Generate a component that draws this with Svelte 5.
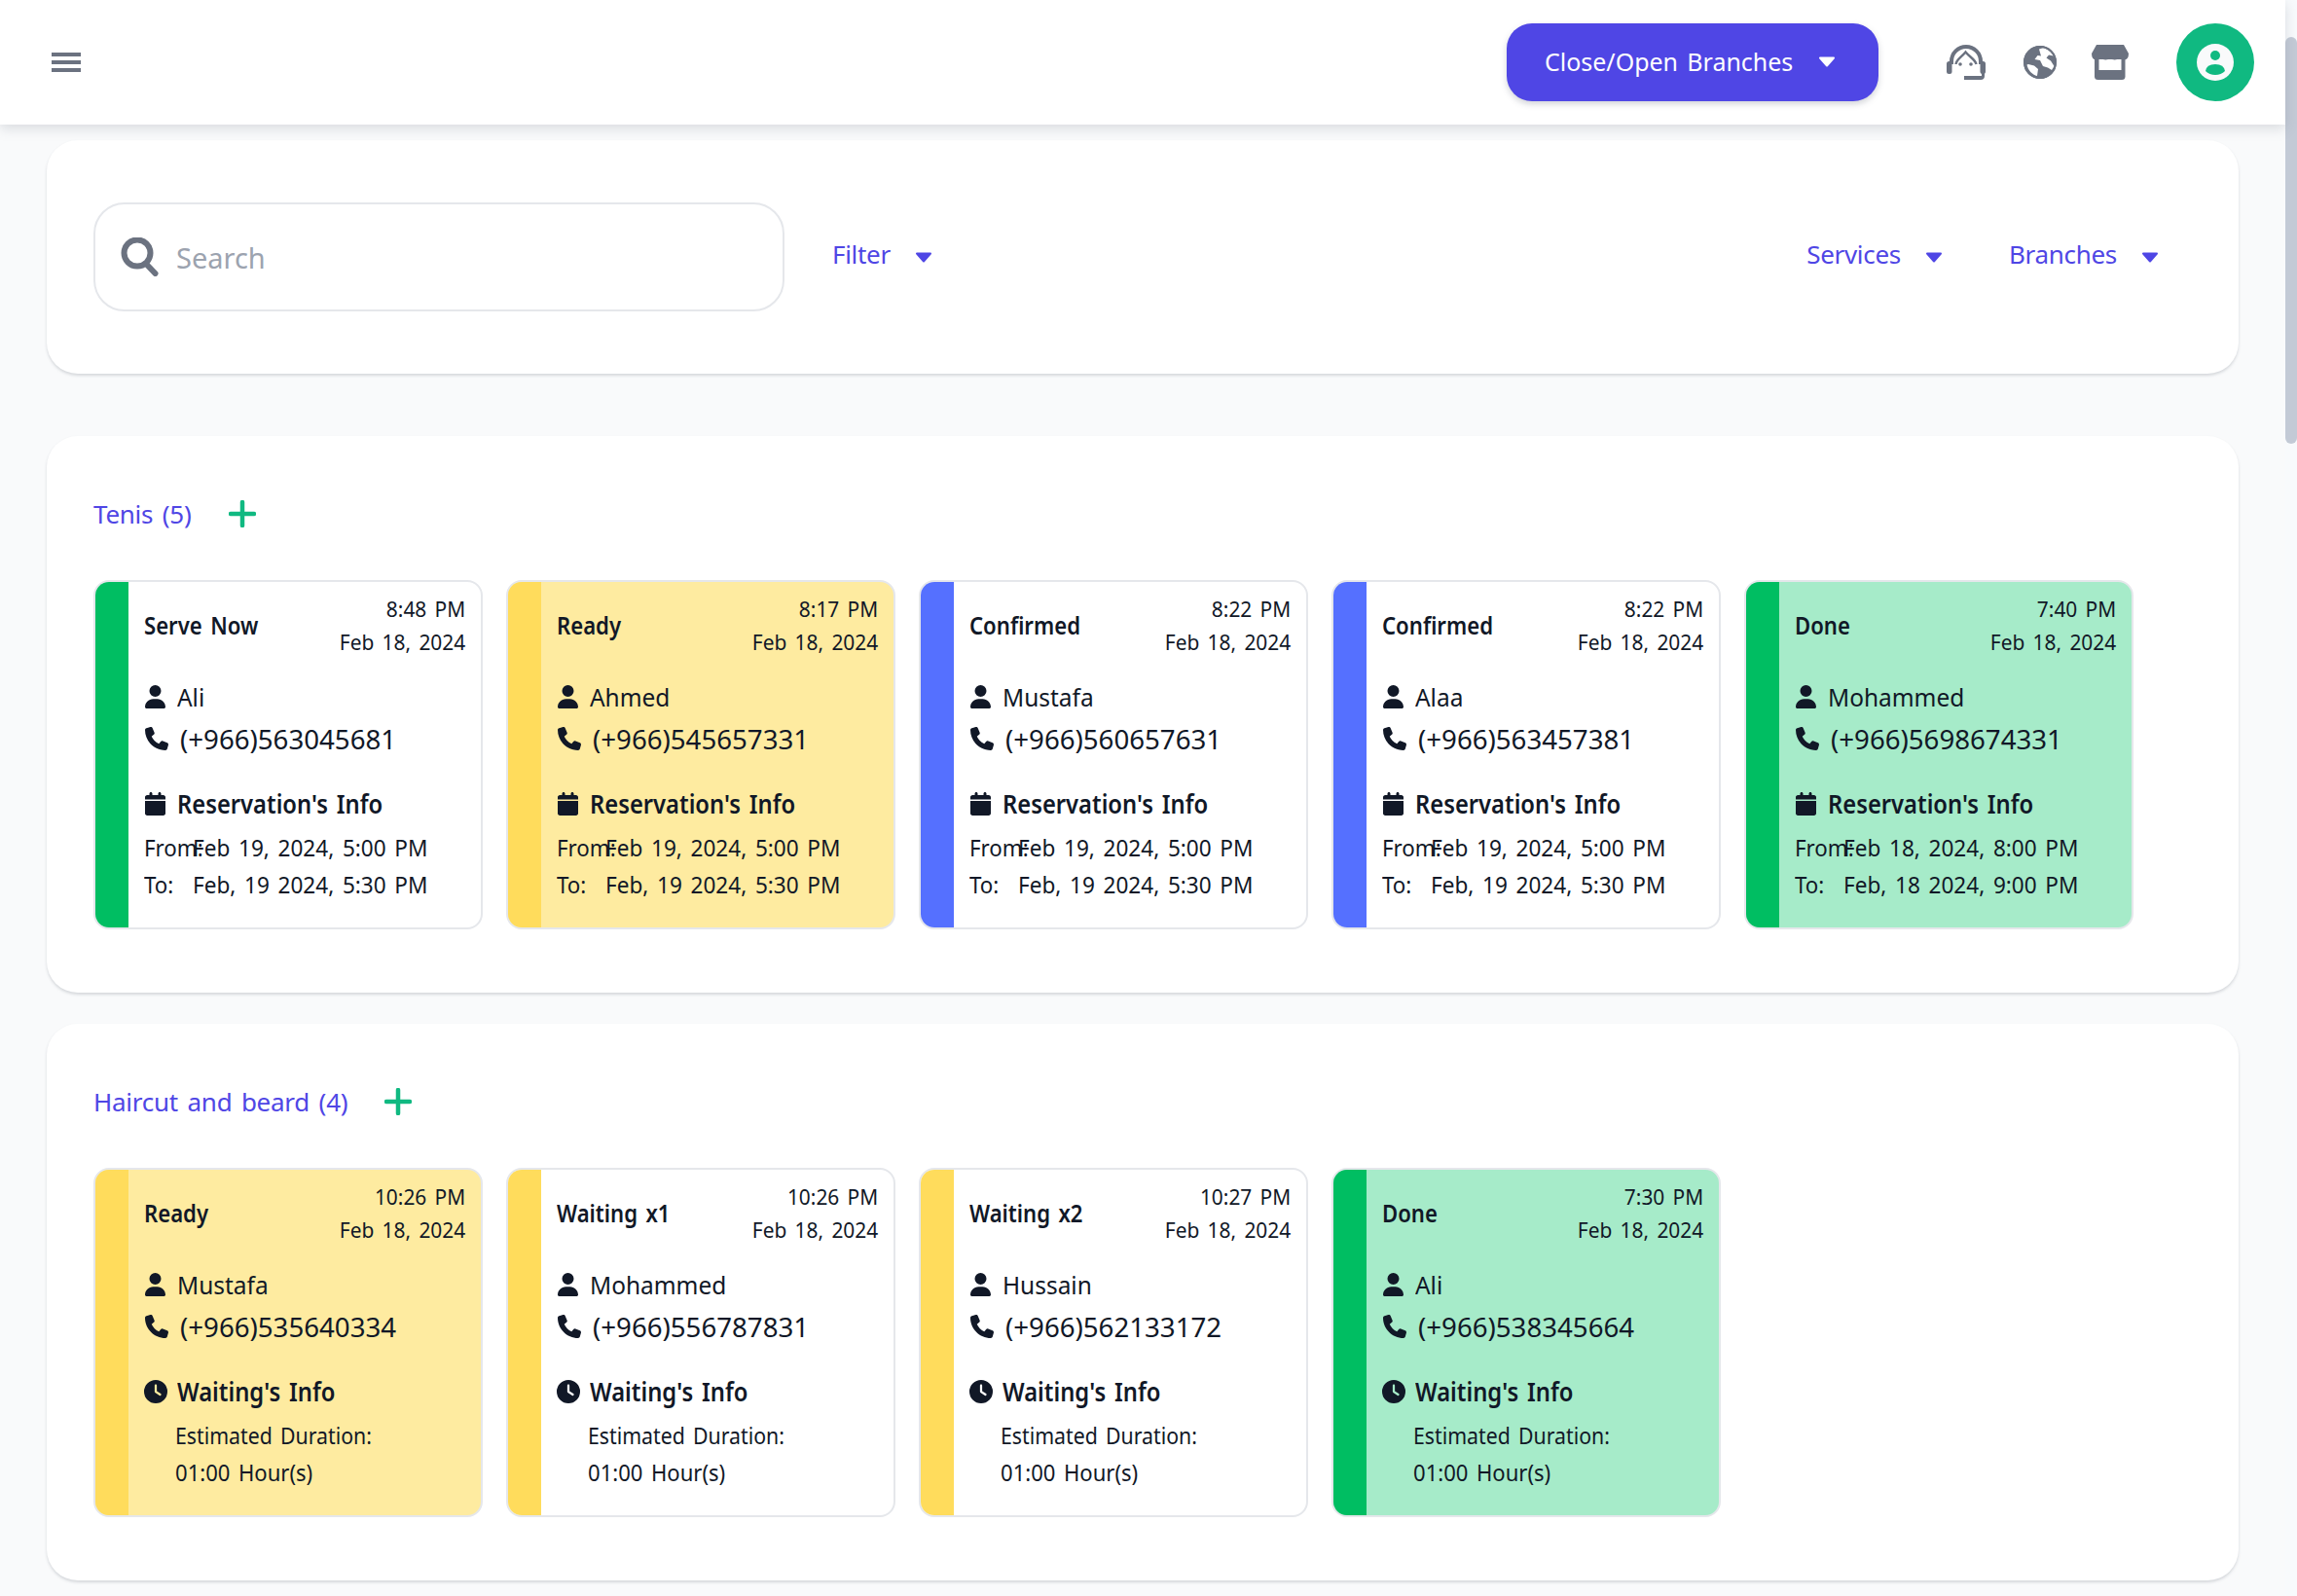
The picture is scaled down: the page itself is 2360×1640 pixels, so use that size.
<script>
  const P = {
    user: ['0 0 448 512','M224 256A128 128 0 1 0 224 0a128 128 0 1 0 0 256zm-45.7 48C79.8 304 0 383.8 0 482.3C0 498.7 13.3 512 29.7 512H418.3c16.4 0 29.7-13.3 29.7-29.7C448 383.8 368.2 304 269.7 304H178.3z'],
    phone: ['0 0 512 512','M164.9 24.6c-7.7-18.6-28-28.5-47.4-23.2l-88 24C12.1 30.2 0 46 0 64C0 311.4 200.6 512 448 512c18 0 33.8-12.1 38.6-29.5l24-88c5.3-19.4-4.6-39.7-23.2-47.4l-96-40c-16.3-6.8-35.2-2.1-46.3 11.6L304.7 368C234.3 334.7 177.3 277.7 144 207.3L193.3 167c13.7-11.2 18.4-30 11.6-46.3l-40-96z'],
    cal: ['0 0 448 512','M96 32V64H48C21.5 64 0 85.5 0 112v48H448V112c0-26.5-21.5-48-48-48H352V32c0-17.7-14.3-32-32-32s-32 14.3-32 32V64H160V32c0-17.7-14.3-32-32-32S96 14.3 96 32zM448 192H0V464c0 26.5 21.5 48 48 48H400c26.5 0 48-21.5 48-48V192z'],
    clock: ['0 0 512 512','M256 0a256 256 0 1 1 0 512A256 256 0 1 1 256 0zM232 120V256c0 8 4 15.5 10.7 20l96 64c11 7.4 25.9 4.4 33.3-6.7s4.4-25.9-6.7-33.3L280 243.2V120c0-13.3-10.7-24-24-24s-24 10.7-24 24z']
  };

  const res = (status, color, time, date, name, phone, from, to) => ({ kind: 'res', status, color, time, date, name, phone, from, to });
  const wait = (status, color, time, date, name, phone) => ({ kind: 'wait', status, color, time, date, name, phone });

  const sections = [
    { title: 'Tenis', count: 5, cards: [
      res('Serve Now', 'green', '8:48 PM', 'Feb 18, 2024', 'Ali', '(+966)563045681', 'Feb 19, 2024, 5:00 PM', 'Feb, 19 2024, 5:30 PM'),
      res('Ready', 'ready', '8:17 PM', 'Feb 18, 2024', 'Ahmed', '(+966)545657331', 'Feb 19, 2024, 5:00 PM', 'Feb, 19 2024, 5:30 PM'),
      res('Confirmed', 'blue', '8:22 PM', 'Feb 18, 2024', 'Mustafa', '(+966)560657631', 'Feb 19, 2024, 5:00 PM', 'Feb, 19 2024, 5:30 PM'),
      res('Confirmed', 'blue', '8:22 PM', 'Feb 18, 2024', 'Alaa', '(+966)563457381', 'Feb 19, 2024, 5:00 PM', 'Feb, 19 2024, 5:30 PM'),
      res('Done', 'done', '7:40 PM', 'Feb 18, 2024', 'Mohammed', '(+966)5698674331', 'Feb 18, 2024, 8:00 PM', 'Feb, 18 2024, 9:00 PM')
    ]},
    { title: 'Haircut and beard', count: 4, cards: [
      wait('Ready', 'ready', '10:26 PM', 'Feb 18, 2024', 'Mustafa', '(+966)535640334'),
      wait('Waiting x1', 'yellow', '10:26 PM', 'Feb 18, 2024', 'Mohammed', '(+966)556787831'),
      wait('Waiting x2', 'yellow', '10:27 PM', 'Feb 18, 2024', 'Hussain', '(+966)562133172'),
      wait('Done', 'done', '7:30 PM', 'Feb 18, 2024', 'Ali', '(+966)538345664')
    ]}
  ];
</script>

{#snippet icon(name, cls)}
  <svg class={cls} viewBox={P[name][0]} aria-hidden="true"><path d={P[name][1]} fill="currentColor" /></svg>
{/snippet}

{#snippet caret()}
  <svg class="caret" viewBox="0 0 18 11" aria-hidden="true"><path d="M2 1.500H16L9 9.500Z" fill="currentColor" stroke="currentColor" stroke-width="2" stroke-linejoin="round" /></svg>
{/snippet}

{#snippet dropdown(label)}
  <button class="drop"><span>{label}</span>{@render caret()}</button>
{/snippet}

<div class="page">
  <div class="main">
    <header class="topbar">
      <svg class="menu" viewBox="0 0 30 20" aria-hidden="true">
        <rect y="0" width="30" height="4" /><rect y="8" width="30" height="4" /><rect y="16" width="30" height="4" />
      </svg>
      <div class="top-right">
        <button class="branch-btn"><span>Close/Open Branches</span>{@render caret()}</button>
        <svg class="i-agent" viewBox="0 0 40 36" aria-hidden="true">
          <path d="M5 20V17A15 15 0 0 1 35 17V20" fill="none" stroke="#6b7280" stroke-width="4" />
          <path d="M9.500 20C10 15 15 13 19.500 7.500C24 13 29.500 15 30.500 20" fill="none" stroke="#6b7280" stroke-width="2.400" />
          <rect x="0" y="17" width="5.500" height="13" rx="2.500" fill="#6b7280" />
          <rect x="34.500" y="17" width="5.500" height="13" rx="2.500" fill="#6b7280" />
          <circle cx="14" cy="20" r="1.800" fill="#6b7280" /><circle cx="25" cy="20" r="1.800" fill="#6b7280" />
          <path d="M36 28V32H18V36H35Q39 36 39 32V28Z" fill="#6b7280" />
        </svg>
        <svg class="i-globe" viewBox="0 0 34 34" aria-hidden="true">
          <circle cx="17" cy="17" r="17" fill="#6b7280" />
          <path d="M16 3.500L20 2.200C24 2.800 29 6 31 10.500L26 9.500L23.500 12.500L28 15.500L31.500 21L29 25L25 22.500L20 21L17 15L11.500 14L14.500 10L18 10.500ZM5 19L11 20.500L15 24L14 31C9 30 4.500 25 3.500 19.500Z" fill="#fff" />
          <circle cx="17" cy="17" r="16" fill="none" stroke="#6b7280" stroke-width="2" />
        </svg>
        <svg class="i-store" viewBox="0 0 38 36" aria-hidden="true">
          <rect x="3" y="12" width="31.500" height="24" rx="3.500" fill="#6b7280" />
          <rect x="7.500" y="15" width="23" height="11" fill="#fff" />
          <path d="M5 0H33L38 9Q38 15 33.500 15.500Q30 15.500 28.500 13Q26.500 15.500 23.700 15.500Q20.500 15.500 19 13Q17.500 15.500 14.300 15.500Q11.500 15.500 9.500 13Q8 15.500 4.500 15.500Q0 15 0 9Z" fill="#6b7280" />
        </svg>
        <div class="avatar">
          <svg viewBox="0 0 38 38" aria-hidden="true">
            <circle cx="19" cy="19" r="19" fill="#f9fafb" />
            <circle cx="19" cy="12" r="5" fill="#10b981" />
            <path d="M9 28Q10 21 19 21Q28 21 29 28Q25 32 19 32Q13 32 9 28Z" fill="#10b981" />
          </svg>
        </div>
      </div>
    </header>

    <main class="content">
      <section class="panel toolbar">
        <div class="search">
          <svg class="i-search" viewBox="0 0 40 40" aria-hidden="true">
            <circle cx="17" cy="16" r="13.500" fill="none" stroke="#6b7280" stroke-width="6" />
            <path d="M26 27L35.500 37" fill="none" stroke="#6b7280" stroke-width="6" stroke-linecap="round" />
          </svg>
          <span class="placeholder">Search</span>
        </div>
        {@render dropdown('Filter')}
        <div class="spacer"></div>
        {@render dropdown('Services')}
        {@render dropdown('Branches')}
      </section>

      {#each sections as s}
        <section class="panel group">
          <div class="group-head">
            <span>{s.title} ({s.count})</span>
            <svg class="plus" viewBox="0 0 28 28" aria-hidden="true"><path d="M14 2V26M2 14H26" /></svg>
          </div>
          <div class="cards">
            {#each s.cards as c}
              <article class="card {c.color}">
                <div class="bar"></div>
                <div class="body">
                  <div class="head">
                    <strong>{c.status}</strong>
                    <div class="stamp"><div>{c.time}</div><div>{c.date}</div></div>
                  </div>
                  <div class="row name">{@render icon('user', 'ic-user')}<span>{c.name}</span></div>
                  <div class="row phone">{@render icon('phone', 'ic-phone')}<span>{c.phone}</span></div>
                  {#if c.kind === 'res'}
                    <div class="row info">{@render icon('cal', 'ic-user')}<b>Reservation's Info</b></div>
                    <div class="when first"><span class="lbl">From:</span><span class="val">{c.from}</span></div>
                    <div class="when"><span class="lbl">To:</span><span class="val">{c.to}</span></div>
                  {:else}
                    <div class="row info">{@render icon('clock', 'ic-clock')}<b>Waiting's Info</b></div>
                    <div class="est first">Estimated Duration:</div>
                    <div class="est">01:00 Hour(s)</div>
                  {/if}
                </div>
              </article>
            {/each}
          </div>
        </section>
      {/each}
    </main>
  </div>
  <div class="scrollbar"><div class="thumb"></div></div>
</div>

<style>
  :global(body) { margin: 0; background: #f9fafb; }
  .page {
    display: flex; height: 1640px; overflow: hidden; background: #f9fafb;
    font-family: "Noto Sans", sans-serif; color: #111827; word-spacing: 3px;
  }
  .main { flex: 1; min-width: 0; }
  .scrollbar { width: 12px; background: #f8fafc; padding-top: 38px; box-sizing: border-box; }
  .thumb { height: 418px; background: #c3cad6; border-radius: 6px; }

  .topbar {
    height: 128px; background: #fff; display: flex; align-items: center; justify-content: space-between;
    padding: 0 32px 0 53px; box-shadow: 0 4px 12px rgba(107, 114, 128, .22); position: relative;
  }
  .menu { width: 30px; height: 20px; fill: #6b7280; }
  .top-right { display: flex; align-items: center; }
  .branch-btn {
    width: 382px; height: 80px; border: 0; border-radius: 26px; background: #4f46e5; color: #fff;
    font: inherit; font-size: 26px; word-spacing: 3px; display: flex; align-items: center; padding: 0 44px 2px 39px;
    justify-content: space-between; box-shadow: 0 3px 6px rgba(107, 114, 128, .3); margin-right: 70px;
  }
  .branch-btn span { transform: scaleX(.96); transform-origin: left center; }
  .caret { width: 18px; height: 11px; flex: none; }
  .i-agent { width: 40px; height: 36px; margin-right: 39px; }
  .i-globe { width: 34px; height: 34px; margin-right: 36px; }
  .i-store { width: 38px; height: 36px; margin-right: 49px; }
  .avatar { width: 80px; height: 80px; border-radius: 50%; background: #10b981; display: flex; align-items: center; justify-content: center; }
  .avatar svg { width: 38px; height: 38px; }

  .content { padding: 16px 48px 0; }
  .panel { background: #fff; border-radius: 32px; box-shadow: 0 2px 3px rgba(107, 114, 128, .25); }
  .toolbar { height: 240px; box-sizing: border-box; padding: 0 82px 0 48px; display: flex; align-items: center; margin-bottom: 64px; }
  .search {
    width: 710px; height: 112px; box-sizing: border-box; border: 2px solid #e5e7eb; border-radius: 32px;
    display: flex; align-items: center; padding-left: 26px; margin-right: 49px;
  }
  .i-search { width: 40px; height: 40px; margin-right: 17px; }
  .placeholder { font-size: 29px; color: #9ca3af; }
  .spacer { flex: 1; }
  .drop {
    background: none; border: 0; padding: 0; font: inherit; font-size: 26px; color: #4f46e5; display: flex; align-items: center;
    word-spacing: 3px; letter-spacing: -.3px; margin-bottom: 6px;
  }
  .drop + .drop { margin-left: 68px; }
  .drop span { margin-right: 25px; }
  .drop .caret { margin-top: 6px; }

  .group { height: 572px; box-sizing: border-box; padding: 0 48px; margin-bottom: 32px; }
  .group-head { height: 148px; display: flex; align-items: center; gap: 38px; font-size: 26px; letter-spacing: -.25px; color: #4f46e5; padding-top: 12px; box-sizing: border-box; }
  .plus { width: 28px; height: 28px; fill: none; stroke: #10b981; stroke-width: 4.500; stroke-linecap: round; }
  .cards { display: flex; gap: 24px; }

  .card {
    width: 400px; height: 359px; box-sizing: border-box; border: 2px solid #e5e7eb; border-radius: 16px; overflow: hidden;
    display: flex; background: #fff;
  }
  .bar { width: 34px; flex: none; }
  .green .bar, .done .bar { background: #00be62; }
  .yellow .bar, .ready .bar { background: #ffdc5c; }
  .blue .bar { background: #5570ff; }
  .ready { background: #feeba0; }
  .done { background: #a6ebc9; }
  .body { flex: 1; padding: 0 16px; min-width: 0; }
  .head { display: flex; justify-content: space-between; align-items: center; height: 94px; box-sizing: border-box; padding-bottom: 6px; }
  .head strong { font-weight: 600; font-size: 25px; transform: scaleX(.885); transform-origin: left center; }
  .stamp { text-align: right; font-size: 22px; line-height: 34px; }
  .stamp div { transform: scaleX(.95); transform-origin: right center; }
  .row { display: flex; align-items: center; }
  .name { height: 42px; margin-top: 3px; font-size: 26px; }
  .name span { transform: scaleX(.94); transform-origin: left center; }
  .phone { height: 43px; font-size: 28px; }
  .phone span { transform: scaleX(.987); transform-origin: left center; }
  .info { height: 43px; margin-top: 24px; font-size: 27px; }
  .info b { font-weight: 600; transform: scaleX(.88); transform-origin: left center; }
  .ic-user { width: 21px; height: 24px; margin: 0 12px 0 1px; flex: none; }
  .ic-phone { width: 24px; height: 24px; margin: 0 12px 0 1px; flex: none; }
  .ic-clock { width: 24px; height: 24px; margin-right: 10px; flex: none; }
  .when { display: flex; font-size: 24px; line-height: 38px; }
  .when.first { margin-top: 5px; }
  .lbl { width: 50px; flex: none; white-space: nowrap; transform: scaleX(.93); transform-origin: left center; }
  .val { transform: scaleX(.94); transform-origin: left center; white-space: nowrap; }
  .est { font-size: 24px; line-height: 38px; padding-left: 32px; transform: scaleX(.92); transform-origin: 32px 50%; }
  .est.first { margin-top: 5px; transform: scaleX(.887); }
</style>
